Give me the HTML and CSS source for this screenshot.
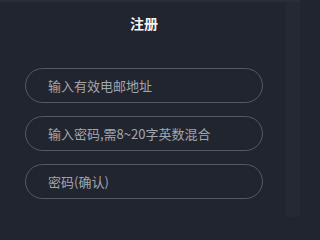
FILE: index.html
```html
<!DOCTYPE html>
<html lang="zh">
<head>
<meta charset="utf-8">
<link rel="stylesheet" href="styles.css">
</head>
<body>
<div class="page">
  <div class="topline"></div>
  <div class="main">
    <h1 class="title">注册</h1>
    <form class="form">
      <div class="field"><input class="input" type="text" placeholder="输入有效电邮地址"></div>
      <div class="field"><input class="input" type="password" placeholder="输入密码,需8~20字英数混合"></div>
      <div class="field"><input class="input" type="password" placeholder="密码(确认)"></div>
    </form>
  </div>
</div>
</body>
</html>
```
FILE: styles.css
```css
html, body {
  margin: 0;
  padding: 0;
  width: 300px;
  height: 217px;
  overflow: hidden;
  background: #212530;
}
.page {
  width: 300px;
  height: 217px;
  display: flex;
  flex-direction: column;
  background: linear-gradient(to right, #212530 0, #212530 286px, #252932 286px);
  font-family: "Noto Sans CJK SC", "Noto Sans", sans-serif;
}
.topline {
  height: 2px;
  background: #2a2e38;
}
.main {
  width: 286px;
  display: flex;
  flex-direction: column;
  align-items: center;
}
.title {
  margin: 11px 0 0 0;
  font-size: 14px;
  line-height: 20px;
  font-weight: 700;
  color: #f2f3f5;
  padding-left: 2px;
}
.form {
  margin-top: 35px;
  display: flex;
  flex-direction: column;
  gap: 13px;
  width: 238px;
  margin-left: 2px;
}
.field {
  display: flex;
}
.input {
  box-sizing: border-box;
  width: 100%;
  height: 35px;
  border: 1px solid #545966;
  border-radius: 18px;
  background: transparent;
  padding: 0 0 0 22px;
  font-family: "Noto Sans CJK SC", "Noto Sans", sans-serif;
  font-size: 13px;
  color: #c8cad0;
  outline: none;
}
.input::placeholder {
  color: #a3a6ad;
  opacity: 1;
}
```
